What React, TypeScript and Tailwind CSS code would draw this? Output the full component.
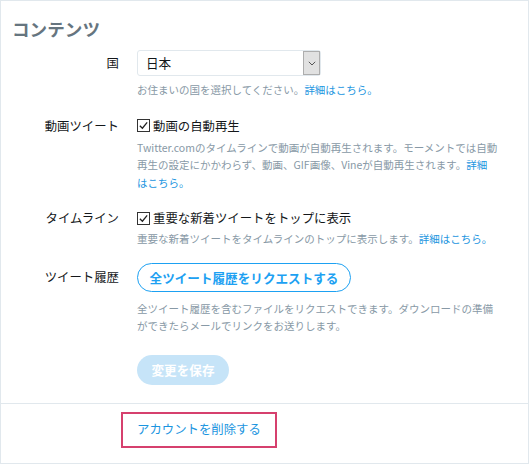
import React from "react";

const font = { fontFamily: '"Noto Sans CJK JP", "Liberation Sans", sans-serif' };

const Checkbox = () => (
  <span className="mr-[2px] inline-flex h-[13px] w-[13px] shrink-0 items-center justify-center border border-[#333] bg-white">
    <svg viewBox="0 0 12 12" className="h-[11px] w-[11px]" fill="none" stroke="#222" strokeWidth="1.4">
      <path d="M2 6.2 L4.8 9 L10 2.6" />
    </svg>
  </span>
);

const Link = ({ children }: { children: React.ReactNode }) => (
  <span className="text-[#1b95e0]">{children}</span>
);

const Row = ({ label, children, className = "" }: { label: string; children: React.ReactNode; className?: string }) => (
  <div className={"flex " + className}>
    <div className="w-[118px] shrink-0 text-right text-[12.4px] leading-[18px] text-[#14171a]">{label}</div>
    <div className="ml-[18px] flex-1">{children}</div>
  </div>
);

const Desc = ({ children, className = "" }: { children: React.ReactNode; className?: string }) => (
  <div className={"whitespace-nowrap text-[10.5px] leading-[17.5px] text-[#8899a6] " + className}>{children}</div>
);

export default function App() {
  return (
    <div className="flex h-[464px] w-[529px] flex-col border border-[#e1e8ed] bg-white" style={font}>
      <div className="pl-[11px] pt-[18px] text-[17.6px] font-bold leading-[20px] text-[#66757f]">コンテンツ</div>

      {/* 国 */}
      <div className="mt-[11px] flex">
        <div className="w-[118px] shrink-0 text-right text-[12.4px] leading-[26px] text-[#14171a]">国</div>
        <div className="ml-[18px]">
          <div className="flex h-[26px] w-[184px] items-stretch rounded-[3px] border border-[#e1e8ed] bg-white">
            <div className="flex-1 pl-[8px] text-[12.6px] leading-[24px] text-[#14171a]">日本</div>
            <div className="flex w-[17px] items-center justify-center border border-[#adadad] bg-[#e1e1e1]">
              <svg viewBox="0 0 8 5" className="h-[5px] w-[8px]" fill="none" stroke="#555" strokeWidth="1">
                <path d="M0.8 0.8 L4 4 L7.2 0.8" />
              </svg>
            </div>
          </div>
          <Desc className="mt-[5px]">
            お住まいの国を選択してください。<Link>詳細はこちら。</Link>
          </Desc>
        </div>
      </div>

      {/* 動画ツイート */}
      <Row label="動画ツイート" className="mt-[18px]">
        <div className="flex items-center text-[12.4px] leading-[18px] text-[#14171a]">
          <Checkbox />
          <span className="ml-[1px]">動画の自動再生</span>
        </div>
        <Desc className="mt-[4px]">
          Twitter.comのタイムラインで動画が自動再生されます。モーメントでは自動
          <br />
          再生の設定にかかわらず、動画、GIF画像、Vineが自動再生されます。<Link>詳細</Link>
          <br />
          <Link>はこちら。</Link>
        </Desc>
      </Row>

      {/* タイムライン */}
      <Row label="タイムライン" className="mt-[18px]">
        <div className="flex items-center text-[12.4px] leading-[18px] text-[#14171a]">
          <Checkbox />
          <span className="ml-[1px]">重要な新着ツイートをトップに表示</span>
        </div>
        <Desc className="mt-[3px]">
          重要な新着ツイートをタイムラインのトップに表示します。<Link>詳細はこちら。</Link>
        </Desc>
      </Row>

      {/* ツイート履歴 */}
      <div className="mt-[15px] flex">
        <div className="w-[118px] shrink-0 text-right text-[12.4px] leading-[29px] text-[#14171a]">ツイート履歴</div>
        <div className="ml-[18px]">
          <button className="h-[29px] w-[214px] rounded-full border border-[#1da1f2] bg-white text-center text-[12.6px] font-bold leading-[27px] text-[#1da1f2]">
            全ツイート履歴をリクエストする
          </button>
          <Desc className="mt-[8px]">
            全ツイート履歴を含むファイルをリクエストできます。ダウンロードの準備
            <br />
            ができたらメールでリンクをお送りします。
          </Desc>
          <button className="mt-[20px] h-[30px] w-[92px] rounded-full bg-[#c6e4f8] text-center text-[12.6px] font-bold leading-[30px] text-white">
            変更を保存
          </button>
        </div>
      </div>

      <div className="mt-[18px] border-t border-[#e1e8ed] pl-[120px] pt-[8px]">
        <div className="flex h-[36px] w-[156px] items-center border-2 border-[#d6406e] pl-[14px] text-[12.4px] text-[#1b95e0]">
          アカウントを削除する
        </div>
      </div>
    </div>
  );
}
